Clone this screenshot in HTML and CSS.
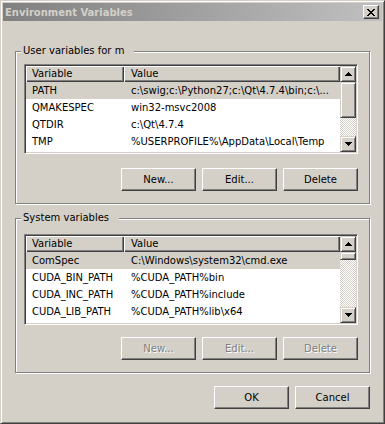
FILE: index.html
```html
<!DOCTYPE html>
<html lang="en">
	<head>
		<meta charset="UTF-8" />
		<title>Environment Variables</title>
		<link rel="stylesheet" href="styles.css">
	</head>
	<body>
		<div class="window">
			<div class="titlebar">
				<span class="title">Environment Variables</span>
				<button class="close-btn" aria-label="Close">
					<svg width="8" height="7" viewBox="0 0 8 7" shape-rendering="crispEdges">
						<path d="M0 0h2v1h-2zM6 0h2v1h-2zM1 1h2v1h-2zM5 1h2v1h-2zM2 2h4v1h-4zM3 3h2v1h-2zM2 4h4v1h-4zM1 5h2v1h-2zM5 5h2v1h-2zM0 6h2v1h-2zM6 6h2v1h-2z" fill="#000" />
					</svg>
				</button>
			</div>

			<div class="dialog-body">
				<div class="group group-user">
					<span class="group-label">User variables for m</span>
					<div class="listview list-user">
						<div class="list-main">
							<div class="list-header">
								<div class="col-var">Variable</div>
								<div class="col-val">Value</div>
							</div>
							<div class="row selected">
								<div class="col-var">PATH</div>
								<div class="col-val">c:\swig;c:\Python27;c:\Qt\4.7.4\bin;c:\...</div>
							</div>
							<div class="row">
								<div class="col-var">QMAKESPEC</div>
								<div class="col-val">win32-msvc2008</div>
							</div>
							<div class="row">
								<div class="col-var">QTDIR</div>
								<div class="col-val">c:\Qt\4.7.4</div>
							</div>
							<div class="row">
								<div class="col-var">TMP</div>
								<div class="col-val">%USERPROFILE%\AppData\Local\Temp</div>
							</div>
						</div>
						<div class="scrollbar">
							<div class="sb-btn">
								<svg width="7" height="4" viewBox="0 0 7 4" shape-rendering="crispEdges"><path d="M3 0h1v1h-1zM2 1h3v1h-3zM1 2h5v1h-5zM0 3h7v1h-7z" fill="#000" /></svg>
							</div>
							<div class="sb-thumb" style="height: 36px"></div>
							<div class="sb-track"></div>
							<div class="sb-btn">
								<svg width="7" height="4" viewBox="0 0 7 4" shape-rendering="crispEdges"><path d="M0 0h7v1h-7zM1 1h5v1h-5zM2 2h3v1h-3zM3 3h1v1h-1z" fill="#000" /></svg>
							</div>
						</div>
					</div>
					<div class="btn-row">
						<button class="btn">New...</button>
						<button class="btn">Edit...</button>
						<button class="btn">Delete</button>
					</div>
				</div>

				<div class="group group-system">
					<span class="group-label">System variables</span>
					<div class="listview list-system">
						<div class="list-main">
							<div class="list-header">
								<div class="col-var">Variable</div>
								<div class="col-val">Value</div>
							</div>
							<div class="row selected">
								<div class="col-var">ComSpec</div>
								<div class="col-val">C:\Windows\system32\cmd.exe</div>
							</div>
							<div class="row">
								<div class="col-var">CUDA_BIN_PATH</div>
								<div class="col-val">%CUDA_PATH%bin</div>
							</div>
							<div class="row">
								<div class="col-var">CUDA_INC_PATH</div>
								<div class="col-val">%CUDA_PATH%include</div>
							</div>
							<div class="row">
								<div class="col-var">CUDA_LIB_PATH</div>
								<div class="col-val">%CUDA_PATH%lib\x64</div>
							</div>
						</div>
						<div class="scrollbar">
							<div class="sb-btn">
								<svg width="7" height="4" viewBox="0 0 7 4" shape-rendering="crispEdges"><path d="M3 0h1v1h-1zM2 1h3v1h-3zM1 2h5v1h-5zM0 3h7v1h-7z" fill="#000" /></svg>
							</div>
							<div class="sb-thumb" style="height: 8px"></div>
							<div class="sb-track"></div>
							<div class="sb-btn">
								<svg width="7" height="4" viewBox="0 0 7 4" shape-rendering="crispEdges"><path d="M0 0h7v1h-7zM1 1h5v1h-5zM2 2h3v1h-3zM3 3h1v1h-1z" fill="#000" /></svg>
							</div>
						</div>
					</div>
					<div class="btn-row">
						<button class="btn" disabled>New...</button>
						<button class="btn" disabled>Edit...</button>
						<button class="btn" disabled>Delete</button>
					</div>
				</div>

				<div class="dialog-buttons">
					<button class="btn">OK</button>
					<button class="btn">Cancel</button>
				</div>
			</div>
		</div>
	</body>
</html>
```

FILE: styles.css
```css
* {
	box-sizing: border-box;
}

body {
	margin: 0;
	font-family: "DejaVu Sans", Tahoma, sans-serif;
	font-size: 10px;
	color: #000;
	background-color: #d4d0c8;
}

.window {
	width: 385px;
	height: 424px;
	display: flex;
	flex-direction: column;
	padding: 2px;
	background-color: #d4d0c8;
	border: 1px solid;
	border-color: #d4d0c8 #404040 #404040 #d4d0c8;
	box-shadow: inset 1px 1px #fff, inset -1px -1px #808080;
}

.titlebar {
	height: 18px;
	display: flex;
	align-items: center;
	justify-content: space-between;
	padding: 0 3px 0 2px;
	background: linear-gradient(to right, #808080, #c0c0c0);
}

.title {
	font-weight: bold;
	font-size: 10px;
	color: #d4d0c8;
}

.close-btn {
	width: 16px;
	height: 14px;
	padding: 0;
	display: flex;
	align-items: center;
	justify-content: center;
	background-color: #d4d0c8;
	border: 1px solid;
	border-color: #fff #404040 #404040 #fff;
	box-shadow: inset -1px -1px #808080;
}

.dialog-body {
	flex: 1;
	display: flex;
	flex-direction: column;
	padding: 30px 12px 0;
}

/* etched group box */
.group {
	position: relative;
	display: flex;
	flex-direction: column;
	padding: 12px 11px 12px 8px;
	border: 1px solid #808080;
	box-shadow: inset 1px 1px #fff, 1px 1px #fff;
}

.group-system {
	margin-top: 14px;
	padding-top: 15px;
}

.group-label {
	position: absolute;
	top: -8px;
	left: 5px;
	padding: 0 10px 0 2px;
	line-height: 13px;
	background-color: #d4d0c8;
}

.listview {
	display: flex;
	height: 90px;
	padding: 1px;
	background-color: #fff;
	border: 1px solid;
	border-color: #808080 #fff #fff #808080;
	box-shadow: inset 1px 1px #404040, inset -1px -1px #d4d0c8;
}

.list-system {
	height: 91px;
}

.list-main {
	flex: 1;
	min-width: 0;
	overflow: hidden;
}

.list-header {
	display: flex;
	height: 16px;
	line-height: 15px;
}

.list-header > div {
	background-color: #d4d0c8;
	box-shadow: inset 1px 1px #fff, inset -1px -1px #404040, inset -2px -2px #808080;
}

.col-var {
	width: 98px;
	flex-shrink: 0;
	padding-left: 6px;
	white-space: nowrap;
	overflow: hidden;
}

.col-val {
	flex: 1;
	padding-left: 7px;
	white-space: nowrap;
	overflow: hidden;
}

.row {
	display: flex;
	height: 17px;
	line-height: 17px;
}

.row.selected {
	background-color: #d4d0c8;
}

.scrollbar {
	width: 16px;
	display: flex;
	flex-direction: column;
}

.sb-btn,
.sb-thumb {
	background-color: #d4d0c8;
	border: 1px solid;
	border-color: #d4d0c8 #404040 #404040 #d4d0c8;
	box-shadow: inset 1px 1px #fff, inset -1px -1px #808080;
}

.sb-btn {
	height: 16px;
	display: flex;
	align-items: center;
	justify-content: center;
}

.sb-track {
	flex: 1;
	background: repeating-conic-gradient(#fff 0 25%, #d4d0c8 0 50%) 0 0 / 2px 2px;
}

.btn-row,
.dialog-buttons {
	display: flex;
	justify-content: flex-end;
	gap: 6px;
}

.btn-row {
	margin-top: 14px;
}

.group-system .btn-row {
	margin-top: 12px;
}

.dialog-buttons {
	margin-top: 13px;
}

.btn {
	width: 75px;
	height: 23px;
	padding: 0;
	font-family: inherit;
	font-size: 10px;
	color: #000;
	background-color: #d4d0c8;
	border: 1px solid;
	border-color: #fff #404040 #404040 #fff;
	box-shadow: inset -1px -1px #808080;
}

.btn:disabled {
	color: #808080;
	text-shadow: 1px 1px #fff;
}
```
